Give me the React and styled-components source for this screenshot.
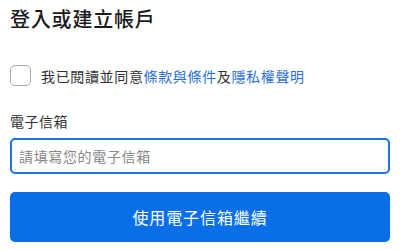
import styled, { createGlobalStyle } from 'styled-components';

const GlobalStyle = createGlobalStyle`
    body {
        margin: 0;
        background: #fff;
        font-family: "Noto Sans CJK TC", "Noto Sans", sans-serif;
        color: #222;
    }
`;

const App = () => {
    return (
        <>
            <GlobalStyle />
            <StyledPage>
                <StyledTitle>登入或建立帳戶</StyledTitle>
                <StyledAgreeRow>
                    <StyledCheckbox type="checkbox" />
                    <StyledAgreeText>
                        我已閱讀並同意<StyledLink href="#">條款與條件</StyledLink>及<StyledLink href="#">隱私權聲明</StyledLink>
                    </StyledAgreeText>
                </StyledAgreeRow>
                <StyledField>
                    <StyledLabel htmlFor="email">電子信箱</StyledLabel>
                    <StyledInput id="email" placeholder="請填寫您的電子信箱" />
                </StyledField>
                <StyledButton>使用電子信箱繼續</StyledButton>
            </StyledPage>
        </>
    );
};

const StyledPage = styled.div`
    display: flex;
    flex-direction: column;
    padding: 5px 10px;
`;

const StyledTitle = styled.h1`
    margin: 0;
    font-size: 20px;
    line-height: 28px;
    letter-spacing: 0.8px;
    font-weight: 500;
    color: #1a1a1a;
`;

const StyledAgreeRow = styled.div`
    display: flex;
    align-items: center;
    gap: 10px;
    margin-top: 32px;
`;

const StyledCheckbox = styled.input`
    appearance: none;
    margin: 0;
    width: 21px;
    height: 21px;
    border: 1px solid #a8a8a8;
    border-radius: 5px;
    background: #fff;
`;

const StyledAgreeText = styled.span`
    font-size: 14px;
    line-height: 20px;
    letter-spacing: 0.65px;
    color: #333;
`;

const StyledLink = styled.a`
    color: #2a6fd8;
    text-decoration: none;
`;

const StyledField = styled.div`
    display: flex;
    flex-direction: column;
    gap: 8px;
    margin-top: 26px;
`;

const StyledLabel = styled.label`
    font-size: 14px;
    line-height: 18px;
    letter-spacing: 0.5px;
    color: #333;
`;

const StyledInput = styled.input`
    box-sizing: border-box;
    height: 36px;
    padding: 0 7px;
    border: 2px solid #1a73e8;
    border-radius: 5px;
    font-family: inherit;
    font-size: 14px;
    letter-spacing: 0.65px;
    outline: none;
    &::placeholder {
        color: #888;
    }
`;

const StyledButton = styled.button`
    margin-top: 18px;
    height: 50px;
    border: none;
    border-radius: 5px;
    background: #0a6ee6;
    color: #fff;
    font-family: inherit;
    font-size: 16px;
    letter-spacing: 0.9px;
`;

export default App;
